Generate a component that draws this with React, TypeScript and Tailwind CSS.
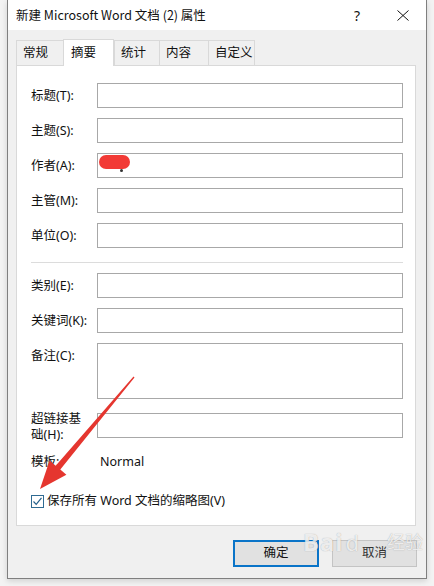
import React from "react"

const font = "font-['Noto_Sans','Noto_Sans_CJK_SC',sans-serif]"

function Row({ label, tall, children }: { label: string; tall?: boolean; children?: React.ReactNode }) {
    return (
        <div className="flex items-start">
            <div className="w-[66px] shrink-0 text-[12.5px] leading-[25px] text-[#111]">{label}</div>
            <div className={`w-[306px] border border-[#a8a8a8] bg-white ${tall ? "h-[56px]" : "h-[25px]"}`}>{children}</div>
        </div>
    )
}

export default function App() {
    const tabs = [
        { name: "常规", w: "w-[47px]" },
        { name: "摘要", w: "w-[51px]", active: true },
        { name: "统计", w: "w-[45px]" },
        { name: "内容", w: "w-[49px]" },
        { name: "自定义", w: "w-[47px]" },
    ]

    return (
        <div className={`relative w-[434px] h-[586px] overflow-hidden bg-[#f3f3f3] pl-[7px] ${font}`}>
            <div className="flex flex-col w-[420px] h-[579px] border-x border-b border-[#7f7f7f] bg-[#f0f0f0] shadow-[0_2px_6px_rgba(0,0,0,0.15)]">

                {/* title bar */}
                <div className="flex items-center h-[30px] bg-white pl-2 text-[12.5px] text-[#111]">
                    <span className="font-['Noto_Sans_CJK_SC',sans-serif]">新建 Microsoft Word 文档 (2) 属性</span>
                    <div className="ml-auto flex h-full">
                        <div className="w-[46px] flex items-center justify-center text-[14px]">?</div>
                        <div className="w-[46px] flex items-center justify-center">
                            <svg width="12" height="11" viewBox="0 0 12 11">
                                <path d="M0.5 0.5 L11.5 10.5 M11.5 0.5 L0.5 10.5" stroke="#111" strokeWidth="1" fill="none" />
                            </svg>
                        </div>
                    </div>
                </div>

                <div className="flex flex-col px-2 pt-[9px]">
                    {/* tabs */}
                    <div className="flex items-end h-[27px]">
                        {tabs.map((t, i) => (
                            <div
                                key={t.name}
                                className={
                                    t.active
                                        ? `${t.w} relative z-10 h-[27px] bg-white border-x border-t border-[#d9d9d9] pl-[7px] flex items-center text-[12.5px] text-[#111]`
                                        : `${t.w} h-[25px] mb-px bg-[#f0f0f0] border-t border-[#d9d9d9] ${i === tabs.length - 1 ? "border-x" : "border-l"} pl-[6px] flex items-center text-[12.5px] text-[#111]`
                                }
                            >
                                {t.name}
                            </div>
                        ))}
                    </div>

                    {/* panel */}
                    <div className="-mt-px w-[400px] h-[461px] bg-white border border-[#d9d9d9] pt-[17px] pl-[14px] pr-[12px] flex flex-col">
                        <div className="flex flex-col gap-[10px]">
                            <Row label="标题(T):" />
                            <Row label="主题(S):" />
                            <Row label="作者(A):">
                                <div className="relative h-full pl-[1px] pt-[1px]">
                                    <div className="w-[31px] h-[14px] rounded-[7px] bg-[#f23a36]" />
                                    <div className="absolute left-[22px] top-[15px] w-[3px] h-[3px] rounded-full bg-[#333]" />
                                </div>
                            </Row>
                            <Row label="主管(M):" />
                            <Row label="单位(O):" />
                        </div>

                        <div className="mt-[14px] h-px bg-[#dcdcdc]" />

                        <div className="mt-[10px] flex flex-col gap-[10px]">
                            <Row label="类别(E):" />
                            <Row label="关键词(K):" />
                            <Row label="备注(C):" tall />
                        </div>

                        <div className="mt-[14px] flex items-start">
                            <div className="w-[66px] shrink-0 -mt-[2px]">
                                <div className="w-[54px] text-[12.5px] leading-[16px] text-[#111]">超链接基础(H):</div>
                            </div>
                            <div className="w-[306px] h-[25px] border border-[#a8a8a8]" />
                        </div>

                        <div className="mt-[11px] flex items-center h-[17px] text-[12.5px] text-[#111]">
                            <div className="w-[66px] shrink-0">模板:</div>
                            <div className="pl-[3px]">Normal</div>
                        </div>

                        <div className="mt-[24px] flex items-center h-[13px] text-[12.5px] text-[#111]">
                            <div className="w-[13px] h-[13px] border border-[#2f6b93] flex items-center justify-center">
                                <svg width="11" height="11" viewBox="0 0 11 11">
                                    <path d="M1.5 5.5 L4.2 8.3 L9.5 1.8" stroke="#235f8a" strokeWidth="1.2" fill="none" />
                                </svg>
                            </div>
                            <span className="ml-[3px]">保存所有 Word 文档的缩略图(V)</span>
                        </div>
                    </div>

                    {/* buttons */}
                    <div className="mt-[14px] flex justify-end gap-[13px] pr-px">
                        <div className="w-[86px] h-[27px] bg-[#e1e1e1] border-2 border-[#0a74c8] flex items-center justify-center text-[12.5px] text-[#111]">确定</div>
                        <div className="w-[85px] h-[27px] bg-[#e1e1e1] border border-[#c4c4c4] flex items-center justify-center text-[12.5px] text-[#333]">取消</div>
                    </div>
                </div>
            </div>

            {/* baidu watermark */}
            <div className="absolute left-[303px] top-[530px] flex items-center gap-[2px] pointer-events-none text-white/80 [text-shadow:0_0_1px_rgba(0,0,0,0.35)]">
                <span className="text-[24px] font-bold leading-none tracking-[1px]">Bai</span>
                <span className="text-[22px] leading-none">d</span>
                <span className="ml-[26px] text-[18px] leading-none">经验</span>
            </div>

            {/* red arrow */}
            <svg className="absolute left-0 top-0 pointer-events-none" width="434" height="586" viewBox="0 0 434 586">
                <polygon
                    points="133.5,376.6 55.7,465.7 49.6,460.5 40,489 66.4,474.7 60.3,469.5 134.5,377.4"
                    fill="#e5362f"
                />
            </svg>
        </div>
    )
}
